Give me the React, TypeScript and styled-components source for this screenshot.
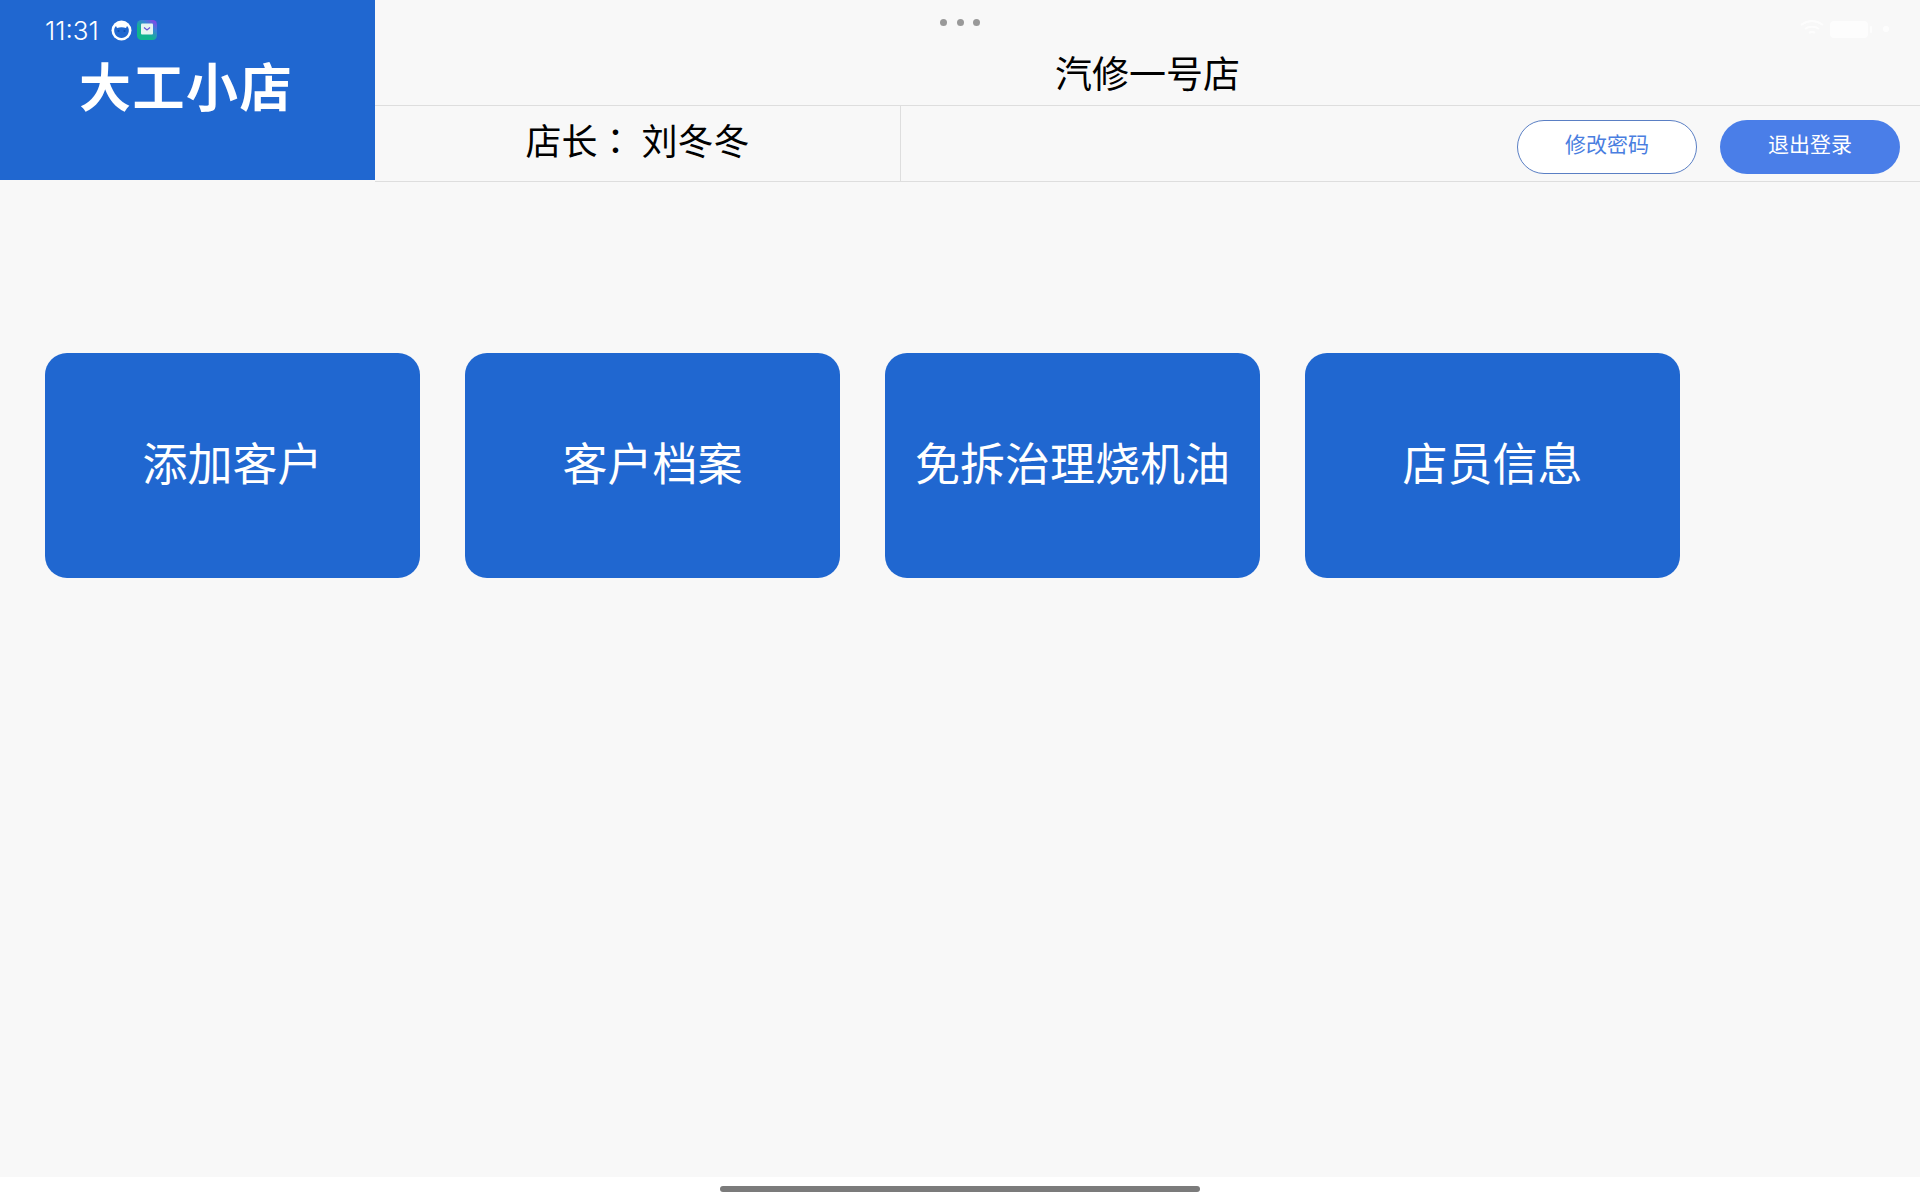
import React from "react";
import styled, { createGlobalStyle } from "styled-components";

const cjk = `"Noto Sans CJK SC", "Noto Sans", sans-serif`;

const Global = createGlobalStyle`
  html, body { margin: 0; padding: 0; background: #fff; }
  * { box-sizing: border-box; }
`;

const Page = styled.div`
  position: relative;
  width: 1920px;
  height: 1200px;
  display: flex;
  flex-direction: column;
  font-family: ${cjk};
  overflow: hidden;
`;

const Body = styled.div`
  height: 1177px;
  background: #f8f8f8;
  display: flex;
  flex-direction: column;
`;

const Header = styled.header`
  display: flex;
  align-items: flex-start;
  height: 182px;
`;

const Brand = styled.div`
  width: 375px;
  height: 180px;
  background: #2067d0;
  color: #fff;
  display: flex;
  justify-content: center;
  padding: 45px 3px 0 0;
  font-size: 52px;
  font-weight: 700;
  line-height: 80px;
  letter-spacing: 1.5px;
`;

const HeaderRight = styled.div`
  flex: 1;
  height: 182px;
  display: flex;
  flex-direction: column;
  border-bottom: 1px solid #dedede;
`;

const StoreRow = styled.div`
  height: 106px;
  padding-top: 46px;
  border-bottom: 1px solid #dedede;
  text-align: center;
  font-size: 37px;
  line-height: 52px;
  color: #000;
`;

const InfoRow = styled.div`
  flex: 1;
  display: flex;
  align-items: center;
`;

const Manager = styled.div`
  width: 526px;
  height: 100%;
  border-right: 1px solid #dedede;
  display: flex;
  align-items: center;
  justify-content: center;
  padding-bottom: 10px;
  font-size: 36px;
  white-space: pre;
  color: #000;
`;

const Colon = styled.span`
  font-family: "Noto Sans CJK TC", sans-serif;
`;

const Actions = styled.div`
  flex: 1;
  display: flex;
  justify-content: flex-end;
  gap: 23px;
  padding: 7px 20px 0 0;
`;

const PillButton = styled.button<{ $primary?: boolean }>`
  width: 180px;
  height: 54px;
  margin: 0;
  padding: 0 0 8px;
  border-radius: 27px;
  border: ${(p) => (p.$primary ? "none" : "1px solid #5a7fc4")};
  background: ${(p) => (p.$primary ? "#4a7ee8" : "#ffffff")};
  color: ${(p) => (p.$primary ? "#ffffff" : "#4a7ee0")};
  font-family: ${cjk};
  font-size: 21px;
`;

const Main = styled.main`
  display: flex;
  gap: 45px;
  padding: 171px 0 0 45px;
`;

const Card = styled.div`
  width: 375px;
  height: 225px;
  border-radius: 22px;
  background: #2067d0;
  color: #fff;
  display: flex;
  align-items: center;
  justify-content: center;
  font-size: 45px;
  padding-bottom: 8px;
`;

const HomeStrip = styled.div`
  flex: 1;
  background: #fff;
  display: flex;
  justify-content: center;
  padding-top: 9px;
`;

const HomeBar = styled.div`
  width: 480px;
  height: 6px;
  border-radius: 3px;
  background: #7b7b7b;
`;

const StatusLeft = styled.div`
  position: absolute;
  left: 45px;
  top: 14px;
  display: flex;
  align-items: center;
  height: 32px;
  color: #fff;
  font-family: Inter, sans-serif;
  font-size: 26px;
  font-weight: 300;
`;

const StatusIcons = styled.div`
  display: flex;
  align-items: center;
  gap: 5px;
  margin-left: 12px;
`;

const MoreDots = styled.div`
  position: absolute;
  left: 940px;
  top: 19px;
  display: flex;
  gap: 9.5px;
`;

const Dot = styled.span`
  width: 7px;
  height: 7px;
  border-radius: 50%;
  background: #999;
`;

const StatusRight = styled.div`
  position: absolute;
  left: 1798px;
  top: 17px;
  opacity: 0.8;
`;

const CatIcon = () => (
  <svg width="21" height="21" viewBox="0 0 21 21">
    <circle cx="10.5" cy="10.5" r="10" fill="#fff" />
    <path
      d="M3.200 9.500 C3.500 8 4 7 5 6 L6 8 C8.500 7 12.500 7 15 8 L16 6 C17 7 17.500 8 17.800 9.500 C18.200 14 15 18 10.500 18 C6 18 2.800 14 3.200 9.500Z"
      fill="#2067d0"
    />
    <circle cx="7.500" cy="11" r="1.100" fill="#0f4fae" />
    <circle cx="13.500" cy="11" r="1.100" fill="#0f4fae" />
  </svg>
);

const MailIcon = () => (
  <svg width="20" height="20" viewBox="0 0 20 20">
    <defs>
      <linearGradient id="mailBg" x1="0.1" y1="1" x2="0.9" y2="0">
        <stop offset="0.35" stopColor="#10b58e" />
        <stop offset="0.7" stopColor="#3b82d8" />
        <stop offset="1" stopColor="#8b3fe8" />
      </linearGradient>
    </defs>
    <rect width="20" height="20" rx="4.500" fill="url(#mailBg)" />
    <rect x="4" y="3.500" width="12" height="11" rx="1" fill="#e6f6f1" />
    <path d="M7 7.500 L10 10 L13 7.500" fill="none" stroke="#6a55d8" strokeWidth="1.200" />
  </svg>
);

const WifiBattery = () => (
  <svg width="96" height="24" viewBox="0 0 96 24" fill="none">
    <path d="M3 8 C10 3 18 3 25 8 M7 12 C11 9 17 9 21 12 M11 16 C13 14.500 15 14.500 17 16" stroke="#fff" strokeWidth="2" />
    <rect x="32" y="4" width="38" height="17" rx="4" fill="#fff" />
    <rect x="72" y="9" width="2" height="7" rx="1" fill="#fff" />
    <circle cx="88" cy="12" r="3" fill="#fff" />
  </svg>
);

const menu = ["添加客户", "客户档案", "免拆治理烧机油", "店员信息"];

export default function App() {
  return (
    <Page>
      <Global />
      <Body>
        <Header>
          <Brand>大工小店</Brand>
          <HeaderRight>
            <StoreRow>汽修一号店</StoreRow>
            <InfoRow>
              <Manager>
                店长<Colon>：</Colon> 刘冬冬
              </Manager>
              <Actions>
                <PillButton>修改密码</PillButton>
                <PillButton $primary>退出登录</PillButton>
              </Actions>
            </InfoRow>
          </HeaderRight>
        </Header>
        <Main>
          {menu.map((m) => (
            <Card key={m}>{m}</Card>
          ))}
        </Main>
      </Body>
      <HomeStrip>
        <HomeBar />
      </HomeStrip>
      <StatusLeft>
        11:31
        <StatusIcons>
          <CatIcon />
          <MailIcon />
        </StatusIcons>
      </StatusLeft>
      <MoreDots>
        <Dot />
        <Dot />
        <Dot />
      </MoreDots>
      <StatusRight>
        <WifiBattery />
      </StatusRight>
    </Page>
  );
}
